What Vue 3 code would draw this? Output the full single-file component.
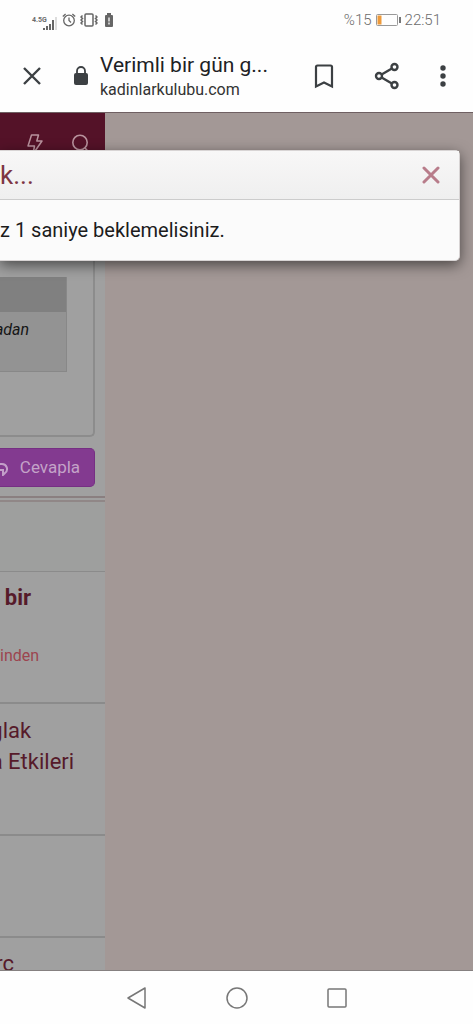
<template>
  <div class="screen">
    <header class="status">
      <div class="status-left">
        <div class="network">
          <span class="gen">4.5G</span>
          <svg width="15" height="13" viewBox="0 0 15 13">
            <path d="M1 11v2M4 9v4M7 7v6M10 3v10" stroke="#666" stroke-width="2" />
            <path d="M13 0v13" stroke="#ddd" stroke-width="2" />
          </svg>
        </div>
        <svg width="14" height="14" viewBox="0 0 14 14" fill="none" stroke="#666" stroke-width="1.3">
          <circle cx="7" cy="7.5" r="5.3" />
          <path d="M7 4.5v3l2 2M.8 3.4L3.6 .9M13.2 3.4L10.4 .9" />
        </svg>
        <svg width="18" height="14" viewBox="0 0 18 14" fill="none" stroke="#666" stroke-width="1.5">
          <rect x="5" y="1" width="8" height="12" rx="1" />
          <path d="M2.500 2.500l-1.500 1.500 1.500 1.500-1.500 1.500 1.500 1.500-1.500 1.500 1.500 1.500M15.500 2.500l1.500 1.500-1.500 1.500 1.500 1.500-1.500 1.500 1.500 1.500-1.500 1.500" />
        </svg>
        <svg class="saver" width="8" height="14" viewBox="0 0 8 14">
          <path d="M2 0h4v2h1a1 1 0 0 1 1 1v10a1 1 0 0 1-1 1H1a1 1 0 0 1-1-1V3a1 1 0 0 1 1-1h1z" fill="#666" />
          <path d="M4 4.500v4M4 9.500v2" stroke="#fff" stroke-width="1.300" />
        </svg>
      </div>
      <div class="status-right">
        <span>%15</span>
        <svg width="25" height="12" viewBox="0 0 25 12">
          <rect x=".5" y=".5" width="21" height="11" rx="1" fill="none" stroke="#999" />
          <path d="M1.500 1.500h4v9h-4z" fill="#ee9a3a" />
          <path d="M24 3v6" stroke="#777" stroke-width="2" />
        </svg>
        <span>22:51</span>
      </div>
    </header>

    <div class="toolbar">
      <button class="icon-btn" aria-label="Kapat">
        <svg width="20" height="20" viewBox="0 0 20 20" fill="none" stroke="#3c4043" stroke-width="2.4">
          <path d="M2 2l16 16M18 2L2 18" />
        </svg>
      </button>
      <svg class="lock" width="16" height="20" viewBox="0 0 16 20">
        <rect x="1" y="7" width="14" height="12" rx="2" fill="#3c4043" />
        <path d="M4 8V5a4 4 0 0 1 8 0v3" fill="none" stroke="#3c4043" stroke-width="1.8" />
      </svg>
      <div class="site">
        <div class="site-title">Verimli bir gün g...</div>
        <div class="site-url">kadinlarkulubu.com</div>
      </div>
      <div class="actions">
        <button class="icon-btn" aria-label="Yer işareti">
          <svg width="20" height="26" viewBox="0 0 20 26" fill="none" stroke="#3c4043" stroke-width="2.2">
            <path d="M2 4a1.500 1.500 0 0 1 1.500-1.500h13A1.500 1.500 0 0 1 18 4v19.500l-8-4-8 4z" />
          </svg>
        </button>
        <button class="icon-btn" aria-label="Paylaş">
          <svg width="26" height="28" viewBox="0 0 26 28" fill="none" stroke="#3c4043" stroke-width="2.4">
            <circle cx="5" cy="14" r="3" />
            <circle cx="20.500" cy="5" r="3" />
            <circle cx="20.500" cy="23" r="3" />
            <path d="M7.600 12.500l10.300-6M7.600 15.500l10.300 6" />
          </svg>
        </button>
        <button class="icon-btn" aria-label="Menü">
          <svg width="6" height="22" viewBox="0 0 6 22" fill="#3c4043">
            <circle cx="3" cy="3" r="2.700" />
            <circle cx="3" cy="11" r="2.700" />
            <circle cx="3" cy="19" r="2.700" />
          </svg>
        </button>
      </div>
    </div>

    <main class="page">
      <div class="forum">
        <div class="forum-header">
          <svg width="16" height="22" viewBox="0 0 16 22" fill="none" stroke="#b8929d" stroke-width="1.5">
            <path d="M4.500 1h7L9.800 7H15L6 20l1.500-8H1z" stroke-linejoin="round" />
          </svg>
          <svg width="18" height="20" viewBox="0 0 18 20" fill="none" stroke="#b8929d" stroke-width="1.6">
            <circle cx="9" cy="8.500" r="7.200" />
            <path d="M14 14l4 4.500" />
          </svg>
        </div>

        <section class="reply">
          <div class="editor">
            <div class="quote">
              <div class="quote-head"></div>
              <div class="quote-body cut">adan</div>
            </div>
          </div>
          <button class="reply-btn">
            <svg width="18" height="18" viewBox="0 0 18 18" fill="none" stroke="#c39fc9" stroke-width="2">
              <path d="M7 2L2 7l5 5M3 6h8a5 5 0 0 1 3 9l-2 2v-5H8" />
            </svg>
            <span>Cevapla</span>
          </button>
        </section>

        <div class="gap-row"></div>

        <article v-for="(row, i) in rows" :key="i" class="topic" :class="row.kind">
          <a v-for="line in row.lines" :key="line.text" href="#" class="cut" :class="line.cls" @click.prevent>{{ line.text }}</a>
        </article>
      </div>

      <div v-if="open" class="modal" role="dialog">
        <div class="modal-head">
          <h2>k...</h2>
          <button class="icon-btn" aria-label="Kapat" @click="open = false">
            <svg width="18" height="18" viewBox="0 0 18 18" fill="none" stroke="#b87c8a" stroke-width="3">
              <path d="M2 2l14 14M16 2L2 16" stroke-linecap="round" />
            </svg>
          </button>
        </div>
        <p>z 1 saniye beklemelisiniz.</p>
      </div>
    </main>

    <nav class="navbar">
      <button class="icon-btn" aria-label="Geri">
        <svg width="20" height="22" viewBox="0 0 20 22" fill="none" stroke="#777" stroke-width="1.5" stroke-linejoin="round">
          <path d="M18 1v20L1 11z" />
        </svg>
      </button>
      <button class="icon-btn" aria-label="Ana ekran">
        <svg width="22" height="22" viewBox="0 0 22 22" fill="none" stroke="#777" stroke-width="1.5">
          <circle cx="11" cy="11" r="10" />
        </svg>
      </button>
      <button class="icon-btn" aria-label="Son uygulamalar">
        <svg width="20" height="20" viewBox="0 0 20 20" fill="none" stroke="#777" stroke-width="1.5">
          <rect x="1" y="1" width="18" height="18" rx="1" />
        </svg>
      </button>
    </nav>
  </div>
</template>

<script setup>
import { ref } from 'vue'

const open = ref(true)

const rows = [
  {
    kind: 'featured',
    lines: [
      { text: 'bir', cls: 'title bold' },
      { text: 'inden', cls: 'meta' }
    ]
  },
  {
    kind: 'double',
    lines: [
      { text: 'ğlak', cls: 'title' },
      { text: 'a Etkileri', cls: 'title wide' }
    ]
  },
  { kind: 'blank', lines: [] },
  { kind: 'last', lines: [{ text: 'rc', cls: 'title short' }] }
]
</script>

<style>
body {
  margin: 0;
}
</style>

<style scoped>
.screen {
  display: flex;
  flex-direction: column;
  height: 100vh;
  background: #fefefe;
  font-family: Roboto, "Noto Sans", sans-serif;
}

.screen * {
  box-sizing: border-box;
}

svg {
  display: block;
  flex: none;
}

.icon-btn {
  display: flex;
  padding: 0;
  border: none;
  background: none;
  cursor: pointer;
}

.status {
  display: flex;
  flex: none;
  justify-content: space-between;
  align-items: center;
  height: 40px;
  padding: 0 32px;
  color: #6b6b6b;
}

.status-left,
.status-right {
  display: flex;
  align-items: center;
  gap: 4px;
}

.status-right {
  font-size: 15px;
  font-weight: 300;
}

.network {
  display: flex;
  align-items: flex-end;
  width: 26px;
}

.gen {
  width: 11px;
  font-size: 7px;
  font-weight: 700;
  line-height: 20px;
  white-space: nowrap;
}

.saver {
  margin-left: 3px;
}

.toolbar {
  display: flex;
  flex: none;
  align-items: center;
  height: 72px;
  padding: 0 27px 0 22px;
}

.lock {
  margin-left: 31px;
}

.site {
  flex: 1;
  margin-left: 11px;
  white-space: nowrap;
}

.site-title {
  color: #202124;
  font-size: 21px;
  line-height: 28px;
}

.site-url {
  color: #333;
  font-size: 16px;
  line-height: 22px;
}

.actions {
  display: flex;
  align-items: center;
  gap: 40px;
}

.page {
  position: relative;
  display: grid;
  grid-template-columns: 2fr 7fr;
  flex: 1;
  min-height: 0;
  overflow: hidden;
  background: #a39896;
  border-top: 1px solid #6f6062;
  border-bottom: 1px solid #858080;
}

.forum {
  display: flex;
  flex-direction: column;
  min-width: 0;
  overflow: hidden;
  background: #a0a0a0;
}

.forum-header {
  display: flex;
  flex: none;
  justify-content: flex-end;
  gap: 28px;
  height: 60px;
  padding: 21px 16px 0 0;
  background: #541228;
}

.reply {
  display: flex;
  flex: none;
  flex-direction: column;
  align-items: flex-end;
  height: 325px;
  padding-right: 10px;
  border-bottom: 2px solid #8a7f80;
}

.editor {
  width: 100%;
  height: 264px;
  padding: 104px 26px 0 0;
  border: 2px solid #8c8c8c;
  border-width: 0 2px 2px 0;
  border-radius: 0 0 5px 0;
}

.quote {
  border-right: 1px solid #888;
  border-bottom: 1px solid #888;
  background: #939393;
}

.quote-head {
  height: 35px;
  background: #808080;
}

.quote-body {
  height: 59px;
  padding: 6px 37px 0 0;
  color: #161616;
  font-size: 16px;
  font-style: italic;
  line-height: 24px;
}

/* text runs off the left edge */
.cut {
  display: flex;
  justify-content: flex-end;
  overflow: hidden;
  white-space: nowrap;
}

.reply-btn {
  display: flex;
  justify-content: flex-end;
  align-items: center;
  gap: 11px;
  width: 100%;
  height: 39px;
  margin-top: 11px;
  padding: 0 14px 2px 0;
  border: 1px solid #762f83;
  border-left: none;
  border-radius: 0 5px 5px 0;
  background: #833a90;
  color: #c3a3c8;
  font-family: inherit;
  font-size: 17px;
  overflow: hidden;
}

.gap-row {
  flex: none;
  height: 72px;
  margin-top: 2px;
  border-top: 2px solid #908787;
  border-bottom: 1px solid #8b8b8b;
  background: #9e9f9e;
}

.topic {
  flex: none;
  border-bottom: 2px solid #8b8b8b;
}

.topic a {
  text-decoration: none;
}

.featured {
  height: 132px;
  padding-top: 10px;
}

.double {
  height: 132px;
  padding-top: 11px;
}

.blank {
  height: 102px;
}

.last {
  height: 60px;
  padding-top: 10px;
}

.title {
  padding-right: 74px;
  color: #561a2a;
  font-size: 22px;
  line-height: 31px;
}

.title.wide {
  padding-right: 31px;
}

.title.short {
  padding-right: 91px;
}

.title.bold {
  font-weight: 700;
}

.meta {
  margin-top: 31px;
  padding-right: 66px;
  color: #9c454f;
  font-size: 16px;
  line-height: 24px;
}

.modal {
  position: absolute;
  top: 37px;
  right: 13px;
  left: 0;
  border: 1px solid #d8d4d4;
  border-left: none;
  border-radius: 0 5px 5px 0;
  background: #fbfbfb;
  box-shadow: 0 4px 14px rgba(0, 0, 0, 0.55);
}

.modal-head {
  display: flex;
  justify-content: space-between;
  align-items: center;
  height: 49px;
  padding-right: 19px;
  border-bottom: 1px solid #ccc;
  background: linear-gradient(#f8f7f7, #efefef);
}

.modal h2 {
  margin: 0;
  color: #7d3543;
  font-size: 26px;
  font-weight: 400;
  line-height: 32px;
}

.modal p {
  margin: 0;
  padding: 18px 0;
  color: #1c1c1c;
  font-size: 20px;
  line-height: 24px;
}

.navbar {
  display: flex;
  flex: none;
  justify-content: center;
  align-items: center;
  gap: 79px;
  height: 53px;
}
</style>
